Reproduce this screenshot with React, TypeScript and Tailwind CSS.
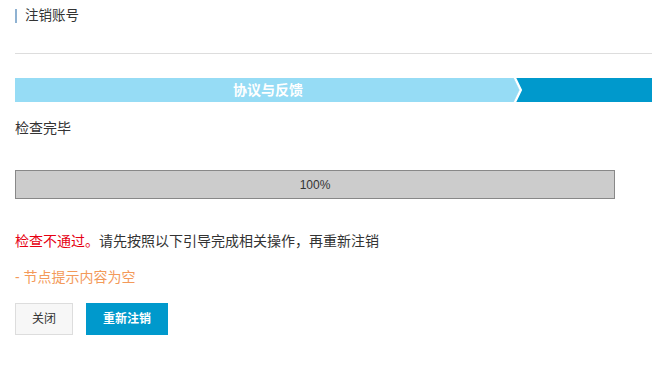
import { FC } from "react";

const App: FC = () => {
	return (
		<div
			className="w-[652px] h-[374px] bg-white pl-[15px] pt-[8px] text-[#333]"
			style={{ fontFamily: '"Liberation Sans", "Noto Sans CJK SC", sans-serif' }}
		>
			<div className="flex items-center h-[16px]">
				<span className="w-[2px] h-[14px] bg-[#8fb2d2]" />
				<span className="ml-[8px] text-[13.5px] leading-[16px]">注销账号</span>
			</div>

			<div className="mt-[29px] h-px bg-[#dddddd]" />

			<div className="mt-[24px] flex h-[24px]">
				<div className="flex-1 bg-[#96dcf5] flex items-center justify-center text-white font-bold text-[14px] pl-[8px]">
					协议与反馈
				</div>
				<svg width="12" height="24" viewBox="0 0 12 24" className="shrink-0 block">
					<rect width="12" height="24" fill="#0099cc" />
					<polygon points="0,0 1,0 7,12 1,24 0,24" fill="#96dcf5" />
					<polyline points="1.5,-1 7.8,12 1.5,25" fill="none" stroke="#ffffff" strokeWidth="2.4" />
				</svg>
				<div className="w-[127px] bg-[#0099cc]" />
			</div>

			<div className="mt-[18px] text-[14px] leading-[16px]">检查完毕</div>

			<div className="mt-[34px] w-[600px] h-[29px] border border-[#888888] bg-[#cccccc] flex items-center justify-center text-[12px]">
				100%
			</div>

			<div className="mt-[34px] text-[14px] leading-[16px]">
				<span className="text-[#e60012]">检查不通过。</span>
				请先按照以下引导完成相关操作，再重新注销
			</div>

			<div className="mt-[20px] text-[14px] leading-[16px] text-[#f39a5a]">- 节点提示内容为空</div>

			<div className="mt-[18px] flex gap-[13px]">
				<button className="w-[58px] h-[32px] border border-[#dddddd] bg-[#f7f7f7] text-[12px] text-[#333]">
					关闭
				</button>
				<button className="w-[82px] h-[32px] bg-[#0099cc] text-white font-bold text-[12px]">
					重新注销
				</button>
			</div>
		</div>
	);
};

export default App;
